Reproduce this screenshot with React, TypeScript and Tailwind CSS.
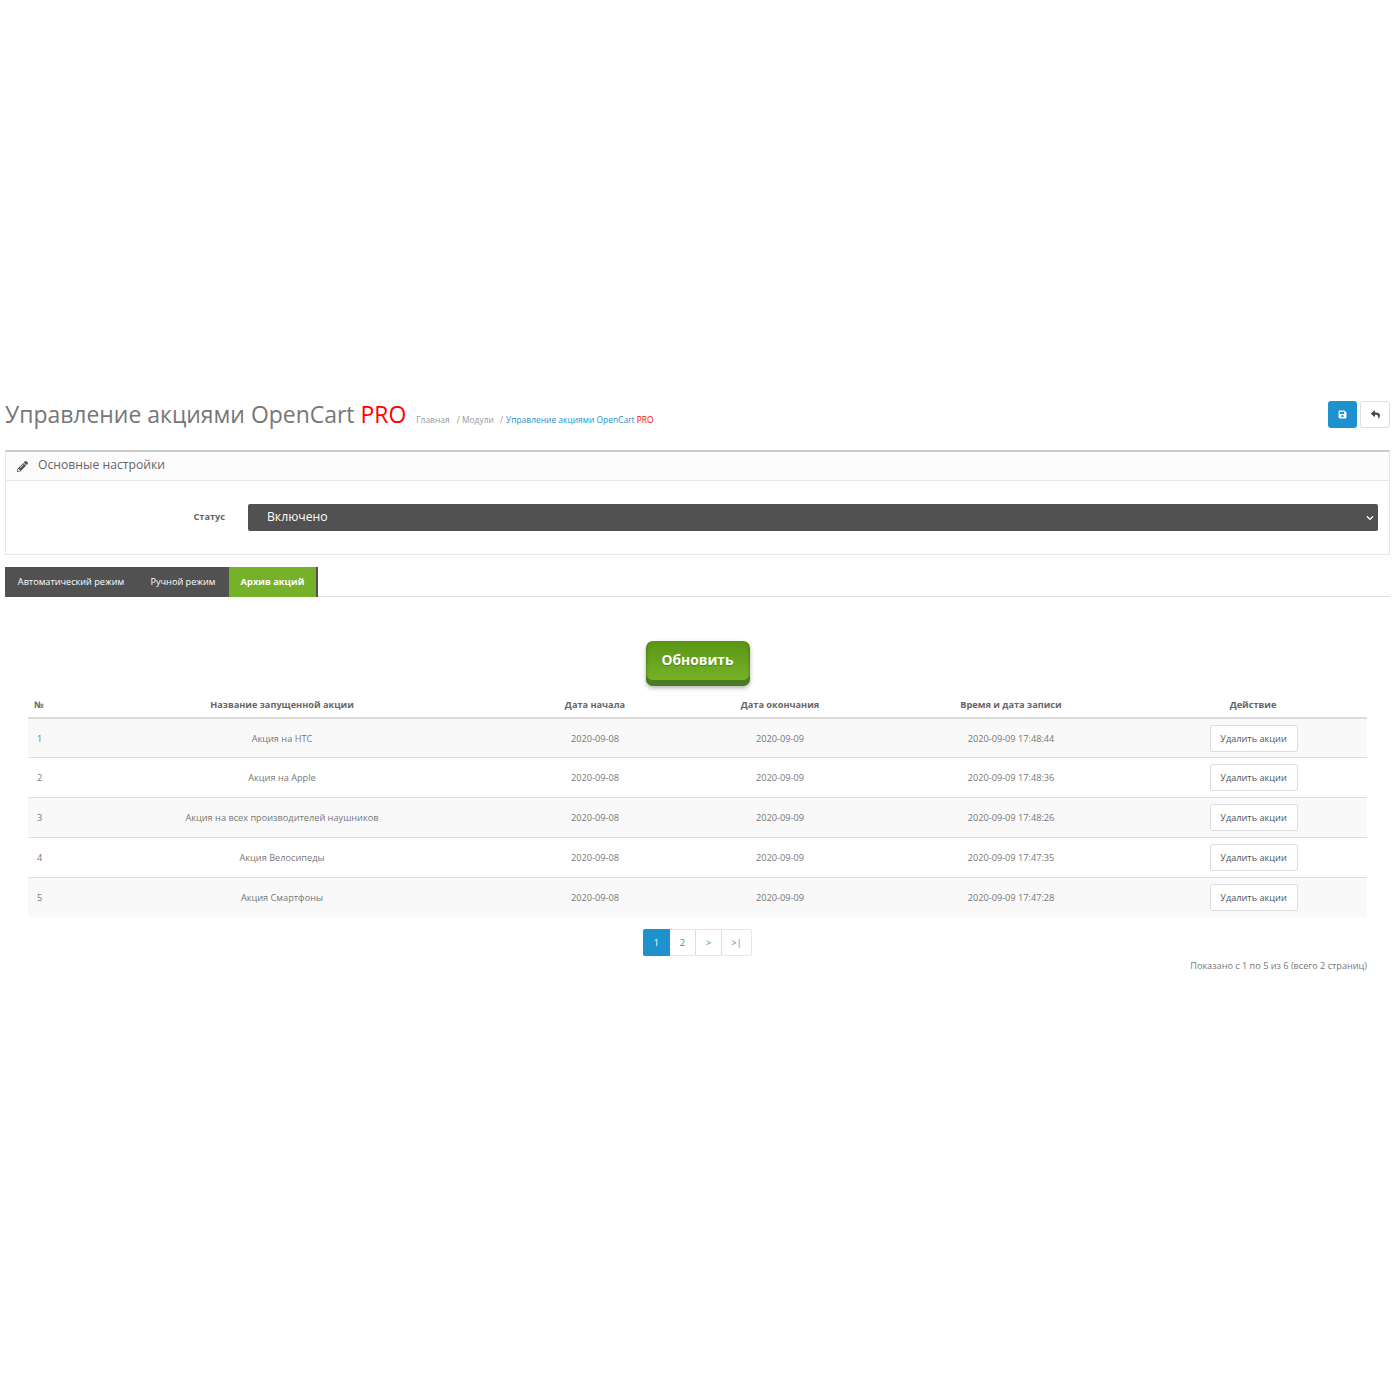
import { FaPencilAlt, FaReply, FaSave, FaChevronDown } from "react-icons/fa";

const rows = [
  { id: 1, name: "Акция на HTC", time: "2020-09-09 17:48:44" },
  { id: 2, name: "Акция на Apple", time: "2020-09-09 17:48:36" },
  { id: 3, name: "Акция на всех производителей наушников", time: "2020-09-09 17:48:26" },
  { id: 4, name: "Акция Велосипеды", time: "2020-09-09 17:47:35" },
  { id: 5, name: "Акция Смартфоны", time: "2020-09-09 17:47:28" },
];

const App = () => {
  return (
    <div className="min-h-[1400px] bg-white px-[5px] pt-[401px] pr-[10px] font-['Open_Sans',sans-serif] text-[#666]">
      {/* Page header */}
      <div className="flex h-[27px] items-center justify-between">
        <div className="flex items-center">
          <h1 className="text-[22.95px] leading-[27px] text-[#777]">
            Управление акциями OpenCart <span className="text-[#ff0000]">PRO</span>
          </h1>
          <div className="ml-[10px] mt-[11px] flex text-[8.45px] text-[#999]">
            <span>Главная</span>
            <span className="ml-[7px]">/ Модули</span>
            <span className="ml-[6px]">/</span>
            <span className="ml-[3px] text-[#1e91cf]">
              Управление акциями OpenCart <span className="text-[#ff0000]">PRO</span>
            </span>
          </div>
        </div>
        <div className="flex gap-[3px]">
          <button className="flex h-[27px] w-[29px] items-center justify-center rounded-[3px] bg-[#1e91cf] text-white">
            <FaSave size={9} />
          </button>
          <button className="flex h-[27px] w-[30px] items-center justify-center rounded-[3px] border border-[#ddd] bg-white text-[#444]">
            <FaReply size={9} />
          </button>
        </div>
      </div>

      {/* Main settings */}
      <div className="mt-[22px] h-[105px] border border-t-2 border-[#e8e8e8] border-t-[#ccc]">
        <div className="flex h-[29px] items-center gap-[10px] border-b border-[#e8e8e8] bg-[#fcfcfc] pl-[11px] text-[12.2px] text-[#666]">
          <FaPencilAlt size={11} className="text-[#555]" />
          <span className="-mt-[1px]">Основные настройки</span>
        </div>
        <div className="flex items-center pt-[23px]">
          <label className="-mt-[1px] w-[219px] text-right text-[9.2px] font-bold text-[#666]">Статус</label>
          <div className="ml-[23px] flex h-[27px] w-[1130px] items-center justify-between rounded-[2px] bg-[#515151] pl-[19px] pr-[4px] text-[12.2px] text-white">
            <span>Включено</span>
            <FaChevronDown size={8} />
          </div>
        </div>
      </div>

      {/* Tabs */}
      <div className="mt-[12px] flex h-[30px] border-b border-[#e0e0e0] text-[9.15px]">
        <div className="flex h-[30px] w-[132px] items-center justify-center bg-[#515151] text-white">Автоматический режим</div>
        <div className="flex h-[30px] w-[92px] items-center justify-center bg-[#515151] text-white">Ручной режим</div>
        <div className="flex h-[30px] w-[89px] items-center justify-center border-r-2 border-[#515151] bg-[#75b22a] text-[9.3px] font-bold text-white">Архив акций</div>
      </div>

      <div className="flex justify-center pt-[44px]">
        <button className="h-[45px] w-[104px] rounded-[7px] bg-gradient-to-b from-[#5a9612] to-[#7ab62a] pb-[6px] text-[13.8px] font-bold text-white [text-shadow:0_1px_1px_rgba(0,0,0,0.25)] shadow-[inset_0_-6px_0_#4a7d22,inset_3px_0_3px_-2px_rgba(0,0,0,0.2),inset_-3px_0_3px_-2px_rgba(0,0,0,0.2),0_2px_4px_rgba(0,0,0,0.3)]">
          Обновить
        </button>
      </div>

      {/* Archive table */}
      <div className="ml-[23px] mr-[23px] mt-[12px]">
        <table className="w-[1339px] table-fixed border-collapse text-[9.2px]">
          <colgroup>
            <col className="w-[23px]" />
            <col className="w-[462px]" />
            <col className="w-[164px]" />
            <col className="w-[206px]" />
            <col className="w-[256px]" />
            <col className="w-[228px]" />
          </colgroup>
          <thead>
            <tr className="h-[20px] border-b-2 border-[#ddd] align-top font-bold text-[#666]">
              <th className="pl-[6px] text-left">№</th>
              <th>Название запущенной акции</th>
              <th>Дата начала</th>
              <th>Дата окончания</th>
              <th>Время и дата записи</th>
              <th>Действие</th>
            </tr>
          </thead>
          <tbody>
            {rows.map((row) => (
              <tr key={row.id} className="h-[39.8px] border-b border-[#ddd] text-center text-[#777] odd:bg-[#f9f9f9] last:border-b-0">
                <td className="pl-[9px] pt-[1px] text-left">{row.id}</td>
                <td className="pt-[1px]">{row.name}</td>
                <td className="pt-[1px]">2020-09-08</td>
                <td className="pt-[1px]">2020-09-09</td>
                <td className="pt-[1px]">{row.time}</td>
                <td>
                  <button className="ml-[1px] h-[27px] w-[88px] rounded-[2px] border border-[#ddd] bg-white pt-[1px] text-[#555]">Удалить акции</button>
                </td>
              </tr>
            ))}
          </tbody>
        </table>

        {/* Pagination */}
        <div className="mt-[12px] flex justify-center text-[9.2px]">
          <div className="flex h-[27px] rounded-[2px] border border-[#e8e8e8] text-[#1e91cf]">
            <span className="-my-px -ml-px flex h-[27px] w-[27px] items-center justify-center rounded-l-[2px] bg-[#1e91cf] text-white">1</span>
            <span className="flex w-[26px] items-center justify-center border-r border-[#ddd]">2</span>
            <span className="flex w-[26px] items-center justify-center border-r border-[#ddd]">&gt;</span>
            <span className="flex w-[29px] items-center justify-center">&gt;|</span>
          </div>
        </div>
        <div className="mt-[3px] text-right text-[9.15px] text-[#777]">Показано с 1 по 5 из 6 (всего 2 страниц)</div>
      </div>
    </div>
  );
};

export default App;
